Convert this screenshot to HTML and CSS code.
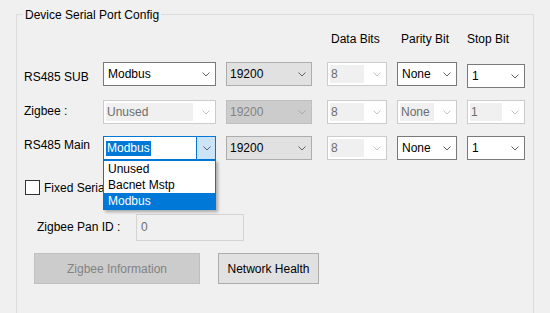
FILE: index.html
```html
<!DOCTYPE html>
<html>
<head>
    <title>Device Serial Port Config</title>
    <link rel="stylesheet" href="styles.css">
</head>
<body>
    <div class="group">
        <div class="group-title">Device Serial Port Config</div>

        <div class="head-row">
            <span class="head h-data">Data Bits</span>
            <span class="head h-parity">Parity Bit</span>
            <span class="head">Stop Bit</span>
        </div>

        <!-- RS485 SUB -->
        <div class="port-row row-sub">
            <span class="port-label">RS485 SUB</span>
            <div class="combo c-proto">
                <span class="combo-text">Modbus</span>
                <svg class="arrow" width="8" height="5"><polyline points="0.5,0.5 4,4 7.5,0.5"/></svg>
            </div>
            <div class="combo combo-btn c-baud">
                <span class="combo-text">19200</span>
                <svg class="arrow" width="8" height="5"><polyline points="0.5,0.5 4,4 7.5,0.5"/></svg>
            </div>
            <div class="combo combo-off c-bits">
                <span class="combo-text">8</span>
                <svg class="arrow" width="8" height="5"><polyline points="0.5,0.5 4,4 7.5,0.5"/></svg>
            </div>
            <div class="combo c-parity">
                <span class="combo-text">None</span>
                <svg class="arrow" width="8" height="5"><polyline points="0.5,0.5 4,4 7.5,0.5"/></svg>
            </div>
            <div class="combo c-stop stop-low">
                <span class="combo-text">1</span>
                <svg class="arrow" width="8" height="5"><polyline points="0.5,0.5 4,4 7.5,0.5"/></svg>
            </div>
        </div>

        <!-- Zigbee -->
        <div class="port-row row-zigbee">
            <span class="port-label">Zigbee :</span>
            <div class="combo combo-off c-proto">
                <span class="combo-text">Unused</span>
                <svg class="arrow" width="8" height="5"><polyline points="0.5,0.5 4,4 7.5,0.5"/></svg>
            </div>
            <div class="combo combo-btn combo-btn-off c-baud">
                <span class="combo-text">19200</span>
                <svg class="arrow" width="8" height="5"><polyline points="0.5,0.5 4,4 7.5,0.5"/></svg>
            </div>
            <div class="combo combo-off c-bits">
                <span class="combo-text">8</span>
                <svg class="arrow" width="8" height="5"><polyline points="0.5,0.5 4,4 7.5,0.5"/></svg>
            </div>
            <div class="combo combo-off c-parity">
                <span class="combo-text">None</span>
                <svg class="arrow" width="8" height="5"><polyline points="0.5,0.5 4,4 7.5,0.5"/></svg>
            </div>
            <div class="combo combo-off c-stop">
                <span class="combo-text">1</span>
                <svg class="arrow" width="8" height="5"><polyline points="0.5,0.5 4,4 7.5,0.5"/></svg>
            </div>
        </div>

        <!-- RS485 Main (dropdown open) -->
        <div class="port-row row-main">
            <span class="port-label">RS485 Main</span>
            <div class="combo combo-focus c-proto">
                <span class="combo-text"><span class="sel">Modbus</span></span>
                <span class="arrow-box">
                    <svg class="arrow" width="8" height="5"><polyline points="0.5,0.5 4,4 7.5,0.5"/></svg>
                </span>
                <ul class="drop-list">
                    <li>Unused</li>
                    <li>Bacnet Mstp</li>
                    <li class="active">Modbus</li>
                </ul>
            </div>
            <div class="combo combo-btn c-baud">
                <span class="combo-text">19200</span>
                <svg class="arrow" width="8" height="5"><polyline points="0.5,0.5 4,4 7.5,0.5"/></svg>
            </div>
            <div class="combo combo-off c-bits">
                <span class="combo-text">8</span>
                <svg class="arrow" width="8" height="5"><polyline points="0.5,0.5 4,4 7.5,0.5"/></svg>
            </div>
            <div class="combo c-parity">
                <span class="combo-text">None</span>
                <svg class="arrow" width="8" height="5"><polyline points="0.5,0.5 4,4 7.5,0.5"/></svg>
            </div>
            <div class="combo c-stop">
                <span class="combo-text">1</span>
                <svg class="arrow" width="8" height="5"><polyline points="0.5,0.5 4,4 7.5,0.5"/></svg>
            </div>
        </div>

        <div class="check-row">
            <span class="check-box"></span>
            <span class="check-label">Fixed Serial Port</span>
        </div>

        <div class="pan-row">
            <span class="pan-label">Zigbee Pan ID :</span>
            <div class="pan-input">0</div>
        </div>

        <div class="button-row">
            <button class="btn btn-zigbee" disabled>Zigbee Information</button>
            <button class="btn btn-health">Network Health</button>
        </div>
    </div>
</body>
</html>
```

FILE: styles.css
```css
body {
    margin: 0;
    background: #f0f0f0;
    font-family: "Liberation Sans", Arial, sans-serif;
    font-size: 12px;
    line-height: 14px;
    color: #000;
    overflow: hidden;
}
.group {
    margin: 14px 0 0 16px;
    width: 516px;
    height: 320px;
    border: 1px solid #dcdcdc;
}
.group-title {
    width: fit-content;
    margin: -7px 0 0 6px;
    padding: 0 2px;
    background: #f0f0f0;
}
.head-row {
    display: flex;
    margin-top: 10px;
    padding-left: 314px;
}
.h-data {
    width: 70px;
}
.h-parity {
    width: 66px;
}
.port-row {
    display: flex;
    align-items: flex-start;
    height: 24px;
    padding-left: 7px;
}
.row-sub {
    margin-top: 16px;
}
.row-zigbee {
    margin-top: 14px;
}
.row-main {
    margin-top: 12px;
}
.port-label {
    width: 79px;
}
.row-sub .port-label {
    padding-top: 8px;
}
.row-zigbee .port-label {
    padding-top: 4px;
}
.row-main .port-label {
    padding-top: 2px;
}

/* combo boxes */
.combo {
    position: relative;
    display: flex;
    align-items: center;
    box-sizing: border-box;
    height: 24px;
    padding-right: 5px;
    background: #fff;
    border: 1px solid #7a7a7a;
}
.combo-text {
    flex: 1;
    padding-left: 4px;
    white-space: nowrap;
}
.arrow {
    display: block;
    fill: none;
    stroke: #606060;
    stroke-width: 1;
}
.c-proto {
    width: 113px;
    margin-right: 10px;
}
.c-baud {
    width: 86px;
    margin-right: 15px;
}
.c-bits {
    width: 60px;
    margin-right: 10px;
}
.c-parity {
    width: 60px;
    margin-right: 10px;
}
.c-stop {
    width: 58px;
}
.stop-low {
    margin-top: 2px;
}
.combo-btn {
    background: #e1e1e1;
    border-color: #adadad;
}
.combo-btn .combo-text {
    padding-left: 3px;
}
.combo-btn-off {
    background: #cccccc;
    border-color: #bfbfbf;
    color: #838383;
}
.combo-btn-off .arrow {
    stroke: #a8a8a8;
}
.combo-off {
    border-color: #cccccc;
}
.combo-off .combo-text {
    align-self: stretch;
    display: flex;
    align-items: center;
    margin: 2px 9px 2px 2px;
    padding-left: 1px;
    background: #f0f0f0;
    color: #6d6d6d;
}
.combo-off .arrow {
    stroke: #c4c4c4;
}
.combo-focus {
    padding-right: 0;
    border-color: #0078d7;
}
.combo-focus .combo-text {
    padding-left: 2px;
}
.sel {
    display: inline-block;
    padding: 0 1px;
    line-height: 15px;
    background: #0078d7;
    color: #fff;
}
.arrow-box {
    display: flex;
    align-items: center;
    justify-content: center;
    align-self: stretch;
    width: 18px;
    background: #cce4f7;
    border-left: 1px solid #0078d7;
}
.arrow-box .arrow {
    margin-left: 1px;
}

/* open dropdown list */
.drop-list {
    position: absolute;
    top: 23px;
    left: -1px;
    z-index: 2;
    width: 113px;
    box-sizing: border-box;
    margin: 0;
    padding: 0;
    list-style: none;
    background: #fff;
    border: 1px solid #0078d7;
    box-shadow: 2px 2px 3px rgba(0, 0, 0, 0.3);
}
.drop-list li {
    height: 16px;
    line-height: 16px;
    padding-left: 4px;
}
.drop-list .active {
    background: #0078d7;
    color: #fff;
}

.check-row {
    display: flex;
    align-items: flex-start;
    margin-top: 20px;
    padding-left: 8px;
}
.check-box {
    width: 13px;
    height: 13px;
    background: #fff;
    border: 1px solid #333;
}
.check-label {
    max-width: 59px;
    margin: 1px 0 0 4px;
    overflow: hidden;
    white-space: nowrap;
}

.pan-row {
    display: flex;
    align-items: flex-start;
    margin-top: 19px;
    padding-left: 20px;
}
.pan-label {
    width: 99px;
    padding-top: 6px;
}
.pan-input {
    box-sizing: border-box;
    width: 108px;
    height: 27px;
    padding: 5px 0 0 4px;
    border: 1px solid #d4d4d4;
    color: #6d6d6d;
}

.button-row {
    display: flex;
    gap: 18px;
    margin-top: 12px;
    padding-left: 17px;
}
.btn {
    box-sizing: border-box;
    height: 31px;
    padding: 0;
    font-family: "Liberation Sans", Arial, sans-serif;
    font-size: 12px;
    background: #e1e1e1;
    border: 1px solid #adadad;
    color: #000;
}
.btn-zigbee {
    width: 166px;
    background: #cccccc;
    border-color: #bfbfbf;
    color: #838383;
}
.btn-health {
    width: 101px;
}
```
